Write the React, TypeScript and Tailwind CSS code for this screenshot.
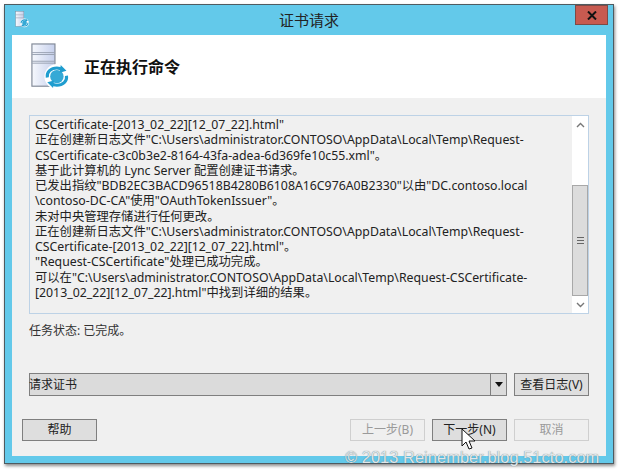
const logLines = [
  'CSCertificate-[2013_02_22][12_07_22].html"',
  '正在创建新日志文件"C:\\Users\\administrator.CONTOSO\\AppData\\Local\\Temp\\Request-',
  'CSCertificate-c3c0b3e2-8164-43fa-adea-6d369fe10c55.xml"。',
  '基于此计算机的 Lync Server 配置创建证书请求。',
  '已发出指纹"BDB2EC3BACD96518B4280B6108A16C976A0B2330"以由"DC.contoso.local',
  '\\contoso-DC-CA"使用"OAuthTokenIssuer"。',
  '未对中央管理存储进行任何更改。',
  '正在创建新日志文件"C:\\Users\\administrator.CONTOSO\\AppData\\Local\\Temp\\Request-',
  'CSCertificate-[2013_02_22][12_07_22].html"。',
  '"Request-CSCertificate"处理已成功完成。',
  '可以在"C:\\Users\\administrator.CONTOSO\\AppData\\Local\\Temp\\Request-CSCertificate-',
  '[2013_02_22][12_07_22].html"中找到详细的结果。',
];

const ServerIcon = ({ size, id }: { size: number; id: string }) => (
  <svg width={size} height={size} viewBox="0 0 48 50">
    <defs>
      <linearGradient id={id} x1="0" y1="0" x2="1" y2="0">
        <stop offset="0" stopColor="#f6f8fd" />
        <stop offset="1" stopColor="#c6d0ec" />
      </linearGradient>
    </defs>
    <rect x="1" y="1" width="24" height="44" fill={`url(#${id})`} stroke="#808896" strokeWidth="1.2" />
    <path d="M1 10h24M1 12h24M1 19h24M1 21h24" stroke="#9aa2b2" strokeWidth="1" />
    <circle cx="27" cy="35" r="13" fill="#ffffff" />
    <circle cx="27" cy="35" r="7" fill="#35a9d6" />
    <path d="M17 36c-1-6 4-10 10-10 2 0 4 .5 6 2" fill="none" stroke="#1f9dcf" strokeWidth="3.2" />
    <path d="M37 34c1 6-4 10-10 10-2 0-4-.5-6-2" fill="none" stroke="#1f9dcf" strokeWidth="3.2" />
    <path d="M31 23l6 6-7 2zM23 47l-6-6 7-2z" fill="#1f9dcf" />
  </svg>
);

const Btn = ({ label, w, disabled, className }: { label: string; w: string; disabled?: boolean; className?: string }) => (
  <div
    className={`${w} h-[22px] flex items-center justify-center border text-[12px] ${
      disabled ? 'border-[#cfcfcf] bg-[#efefef] text-[#9a9a9a]' : 'border-[#7f7f7f] bg-[#dedede] text-[#222]'
    } ${className ?? ''}`}
  >
    {label}
  </div>
);

export default function App() {
  return (
    <div
      className="relative w-[620px] h-[470px] bg-white pl-[4px] pt-[4px] overflow-hidden"
      style={{ fontFamily: '"Noto Sans", "Noto Sans CJK SC", sans-serif' }}
    >
      <div className="w-[610px] h-[460px] flex flex-col border border-[#4f5b60] bg-[#63c9ea] shadow-[1px_2px_3px_rgba(0,0,0,0.45)]">
        {/* title bar */}
        <div className="relative h-[30px] shrink-0 flex items-center justify-center text-[15px] text-[#222]">
          <div className="absolute left-[10px] top-[6px]">
            <ServerIcon size={17} id="srv-small" />
          </div>
          <span>证书请求</span>
          <div className="absolute right-[5px] top-0 w-[33px] h-[20px] flex items-center justify-center bg-[#c75a50] border border-[#7d4a46]">
            <svg width="10" height="9" viewBox="0 0 10 9">
              <path d="M1 .5l8 8M9 .5l-8 8" stroke="#111" strokeWidth="2" />
            </svg>
          </div>
        </div>

        <div className="mx-[7px] flex-1 flex flex-col min-h-0 bg-[#f0f0f0] mb-[7px]">
          {/* header */}
          <div className="h-[63px] shrink-0 bg-white flex items-center pl-[18px]">
            <ServerIcon size={48} id="srv-large" />
            <span className="ml-[6px] text-[16px] font-bold text-[#111]">正在执行命令</span>
          </div>

          {/* log box */}
          <div className="mt-[17px] mx-[17px] h-[199px] flex border border-[#bdd2e6] bg-[#f0f0f0]">
            <div className="flex-1 min-w-0 pl-[5px] pt-[1px] text-[12.3px] leading-[15.25px] text-[#222] whitespace-nowrap overflow-hidden">
              {logLines.map((line) => (
                <div key={line}>{line}</div>
              ))}
            </div>
            <div className="w-[16px] shrink-0 flex flex-col bg-white">
              <div className="h-[17px] flex items-center justify-center">
                <svg width="9" height="6" viewBox="0 0 9 6">
                  <path d="M1 5l3.5-3.5L8 5" fill="none" stroke="#777" strokeWidth="1.4" />
                </svg>
              </div>
              <div className="h-[52px]" />
              <div className="flex-1 flex items-center justify-center bg-[#dcdcdc] border border-[#a8a8a8]">
                <div className="w-[7px] h-[7px] border-y border-[#666] flex items-center">
                  <div className="w-full h-px bg-[#666]" />
                </div>
              </div>
              <div className="h-[17px] flex items-center justify-center">
                <svg width="9" height="6" viewBox="0 0 9 6">
                  <path d="M1 1l3.5 3.5L8 1" fill="none" stroke="#777" strokeWidth="1.4" />
                </svg>
              </div>
            </div>
          </div>

          <div className="mt-[8px] ml-[17px] h-[18px] text-[12px] leading-[18px] text-[#333]">任务状态: 已完成。</div>

          {/* task select */}
          <div className="mt-[33px] mx-[17px] flex h-[23px]">
            <div className="flex-1 flex border border-[#7f7f7f] bg-[#dbdbdb]">
              <span className="flex-1 -ml-px text-[12px] leading-[21px] text-[#222]">请求证书</span>
              <div className="w-[16px] border-l border-[#7f7f7f] flex items-center justify-center">
                <svg width="8" height="5" viewBox="0 0 8 5">
                  <path d="M0 0h8L4 5z" fill="#111" />
                </svg>
              </div>
            </div>
            <Btn label="查看日志(V)" w="w-[75px]" className="ml-[7px] h-[23px]" />
          </div>

          {/* footer buttons */}
          <div className="mt-[23px] ml-[10px] mr-[17px] flex">
            <Btn label="帮助" w="w-[75px]" />
            <div className="flex-1" />
            <Btn label="上一步(B)" w="w-[75px]" disabled />
            <Btn label="下一步(N)" w="w-[75px]" className="ml-[7px]" />
            <Btn label="取消" w="w-[75px]" disabled className="ml-[7px]" />
          </div>
        </div>
      </div>

      {/* pointer */}
      <svg className="absolute left-[461px] top-[428px]" width="16" height="23" viewBox="0 0 16 23">
        <path d="M1 1v17l4-4 3 7 3-1-3-7h6z" fill="#fff" stroke="#111" strokeWidth="1" />
      </svg>

      {/* watermark */}
      <div
        className="absolute left-[345px] top-[447px] text-[16.5px] leading-[20px] text-[#dfe7ea] whitespace-nowrap [text-shadow:0_0_1px_#5c6c78]"
        style={{ fontFamily: '"Liberation Sans", sans-serif' }}
      >
        © 2013 Reinember.blog.51cto.com
      </div>
    </div>
  );
}
